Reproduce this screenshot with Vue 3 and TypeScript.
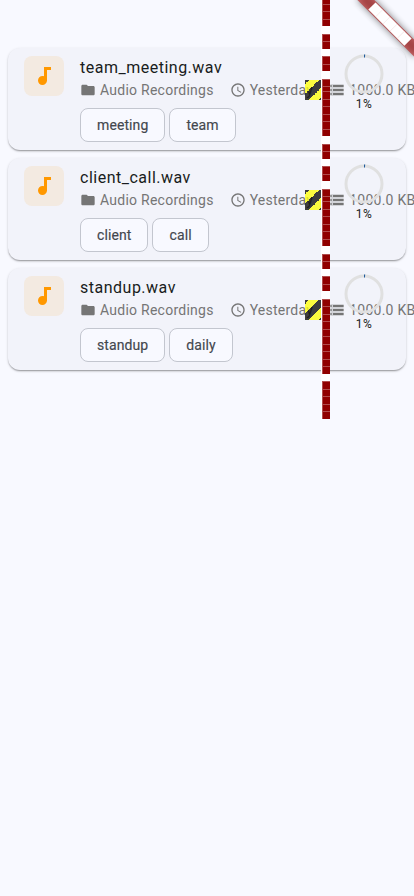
<script setup lang="ts">
interface Recording {
  name: string
  folder: string
  date: string
  size: string
  progress: number
  tags: string[]
}

const recordings: Recording[] = [
  { name: 'team_meeting.wav', folder: 'Audio Recordings', date: 'Yesterday', size: '1000.0 KB', progress: 1, tags: ['meeting', 'team'] },
  { name: 'client_call.wav', folder: 'Audio Recordings', date: 'Yesterday', size: '1000.0 KB', progress: 1, tags: ['client', 'call'] },
  { name: 'standup.wav', folder: 'Audio Recordings', date: 'Yesterday', size: '1000.0 KB', progress: 1, tags: ['standup', 'daily'] },
]

// Block counts of each word in the vertical overflow label, top to bottom.
const words = [6, 2, 2, 10, 5]
</script>

<template>
  <main class="screen">
    <article v-for="rec in recordings" :key="rec.name" class="card">
      <div class="avatar">
        <svg width="24" height="24" viewBox="0 0 24 24"><path fill="#ff9800" d="M12 3v9.28c-.47-.17-.97-.28-1.5-.28C8.01 12 6 14.01 6 16.5S8.01 21 10.5 21c2.31 0 4.2-1.75 4.45-4H15V6h4V3h-7z" /></svg>
      </div>
      <div class="body">
        <h2 class="title">{{ rec.name }}</h2>
        <div class="meta">
          <svg class="icon" viewBox="0 0 24 24"><path d="M10 4H4c-1.1 0-1.99.9-1.99 2L2 18c0 1.1.9 2 2 2h16c1.1 0 2-.9 2-2V8c0-1.1-.9-2-2-2h-8l-2-2z" /></svg>
          <span>{{ rec.folder }}</span>
          <svg class="icon spaced" viewBox="0 0 24 24"><path d="M11.99 2C6.47 2 2 6.48 2 12s4.47 10 9.99 10C17.52 22 22 17.52 22 12S17.52 2 11.99 2zM12 20c-4.42 0-8-3.58-8-8s3.58-8 8-8 8 3.58 8 8-3.58 8-8 8zm.5-13H11v6l5.25 3.15.75-1.23-4.5-2.67z" /></svg>
          <span>{{ rec.date }}</span>
          <svg class="icon spaced" viewBox="0 0 24 24"><path d="M2 20h20v-4H2v4zm2-3h2v2H4v-2zM2 4v4h20V4H2zm4 3H4V5h2v2zm-4 7h20v-4H2v4zm2-3h2v2H4v-2z" /></svg>
          <span>{{ rec.size }}</span>
          <svg class="hatch" width="17" height="20" viewBox="0 0 17 20">
            <defs>
              <linearGradient id="hazard" gradientUnits="userSpaceOnUse" x1="0" y1="0" x2="10" y2="10" spreadMethod="repeat">
                <stop offset=".2" stop-color="#000" stop-opacity=".75" />
                <stop offset=".2" stop-color="#ff0" stop-opacity=".75" />
                <stop offset=".7" stop-color="#ff0" stop-opacity=".75" />
                <stop offset=".7" stop-color="#000" stop-opacity=".75" />
              </linearGradient>
            </defs>
            <rect width="17" height="20" fill="url(#hazard)" />
          </svg>
          <div class="overflow-label">
            <div v-for="(count, w) in words" :key="w" class="word">
              <i v-for="n in count" :key="n" class="block"></i>
            </div>
          </div>
        </div>
        <div class="tags">
          <span v-for="tag in rec.tags" :key="tag" class="tag">{{ tag }}</span>
        </div>
      </div>
      <div class="progress">
        <svg width="40" height="40" viewBox="0 0 40 40">
          <circle cx="20" cy="20" r="18" fill="none" stroke="#e0e0e0" stroke-width="3" />
          <circle cx="20" cy="20" r="18" fill="none" stroke="#1f5a9c" stroke-width="3" pathLength="100" :stroke-dasharray="`${rec.progress} 100`" transform="rotate(-90 20 20)" />
        </svg>
        <span>{{ rec.progress }}%</span>
      </div>
    </article>
    <svg class="ribbon" width="80" height="80" viewBox="0 0 80 80">
      <g transform="translate(80 0) rotate(45)">
        <rect class="ribbon-shadow" x="-40" y="28" width="80" height="12" />
        <rect x="-40" y="28" width="80" height="12" fill="#b71c1c" fill-opacity=".627" />
        <rect x="-25.5" y="28.9" width="51" height="10.2" fill="#fff" />
        <rect v-for="n in 4" :key="n" :x="-25.7 + n * 10.2" y="28.9" width=".4" height="10.2" fill="#f0dede" />
      </g>
    </svg>
  </main>
</template>

<style>
body {
  background: #f8f9ff;
}
</style>

<style scoped>
.screen {
  position: relative;
  box-sizing: border-box;
  width: 414px;
  height: 896px;
  padding: 48px 8px 0;
  overflow: hidden;
  display: flex;
  flex-direction: column;
  gap: 8px;
  background: #f8f9ff;
  color: #191c20;
  font-family: Roboto, sans-serif;
}
.card {
  display: flex;
  box-sizing: border-box;
  height: 102px;
  flex: none;
  padding: 8px 16px 0;
  border-radius: 12px;
  background: #f2f3fa;
  box-shadow: 0 2px 2px -1px rgba(0, 0, 0, 0.22), 0 1px 1px rgba(0, 0, 0, 0.12), 0 1px 3px rgba(0, 0, 0, 0.14);
}
.avatar {
  display: flex;
  flex: none;
  align-items: center;
  justify-content: center;
  width: 40px;
  height: 40px;
  margin-right: 16px;
  border-radius: 8px;
  background: #f3eae1;
}
.body {
  flex: none;
  width: 241px;
}
.title {
  margin: 0;
  font-size: 16px;
  font-weight: 400;
  line-height: 24px;
  letter-spacing: 0.5px;
}
.meta {
  position: relative;
  display: flex;
  align-items: center;
  height: 20px;
  color: #757575;
  font-size: 14px;
  letter-spacing: 0.25px;
  line-height: 20px;
  white-space: nowrap;
}
.icon {
  flex: none;
  width: 16px;
  height: 16px;
  margin-right: 4px;
  fill: #757575;
}
.spaced {
  margin-left: 16px;
}
.hatch {
  position: absolute;
  left: 225px;
  top: 0;
}
.overflow-label {
  position: absolute;
  left: 241px;
  top: -99px;
  display: flex;
  flex-direction: column;
  gap: 7.5px;
  width: 9px;
  background: #fff;
}
.word {
  margin-left: 1px;
}
.block {
  display: block;
  box-sizing: border-box;
  height: 7.5px;
  border-top: 1px solid #b04d4d;
  border-left: 1px solid #b04d4d;
  background: #900000;
}
.tags {
  display: flex;
  gap: 4px;
  margin-top: 8px;
}
.tag {
  box-sizing: border-box;
  height: 34px;
  padding: 0 16px;
  border: 1px solid #c3c6cf;
  border-radius: 8px;
  background: #f8f9ff;
  color: #43474e;
  font-size: 14px;
  font-weight: 400;
  letter-spacing: 0.1px;
  line-height: 32px;
  -webkit-text-stroke: 0.15px #43474e;
}
.progress {
  position: relative;
  display: flex;
  flex: none;
  flex-direction: column;
  align-items: center;
  width: 40px;
  margin: -2px 0 0 23px;
  font-size: 12px;
  line-height: 16px;
  letter-spacing: 0.4px;
}
.progress svg {
  display: block;
  flex: none;
}
.progress span {
  margin-top: 2px;
}
.ribbon {
  position: absolute;
  top: 0;
  right: 0;
}
.ribbon-shadow {
  fill: rgba(0, 0, 0, 0.5);
  filter: blur(3.5px);
}
</style>
